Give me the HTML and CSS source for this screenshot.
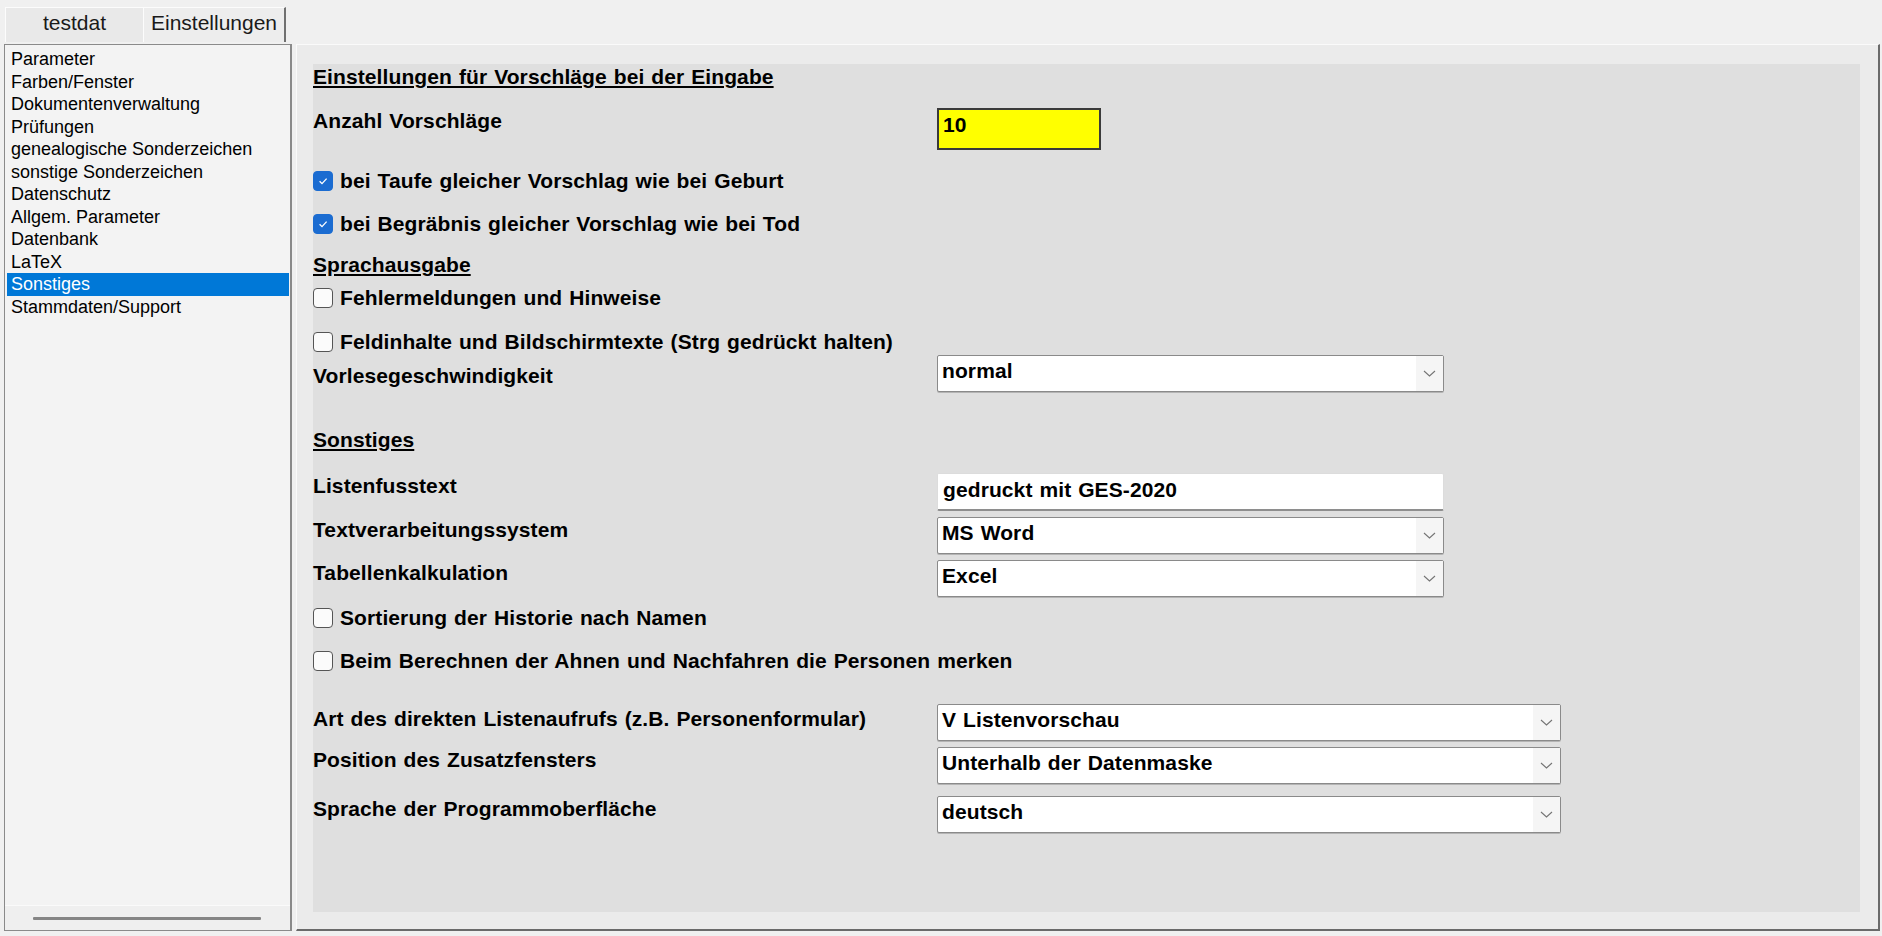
FILE: index.html
```html
<!DOCTYPE html>
<html lang="de">
<head>
    <meta charset="UTF-8">
    <title>Einstellungen</title>
    <link rel="stylesheet" href="styles.css">
</head>
<body>
    <div class="tabs">
        <div class="tab tab-data">testdat</div>
        <div class="tab tab-settings">Einstellungen</div>
    </div>
    <div class="page">
        <div class="nav">
            <ul>
                <li>Parameter</li>
                <li>Farben/Fenster</li>
                <li>Dokumentenverwaltung</li>
                <li>Prüfungen</li>
                <li>genealogische Sonderzeichen</li>
                <li>sonstige Sonderzeichen</li>
                <li>Datenschutz</li>
                <li>Allgem. Parameter</li>
                <li>Datenbank</li>
                <li>LaTeX</li>
                <li class="active">Sonstiges</li>
                <li>Stammdaten/Support</li>
            </ul>
            <div class="hscroll"><span></span></div>
        </div>
        <div class="panel">
            <div class="form">
                <div class="heading">Einstellungen für Vorschläge bei der Eingabe</div>

                <div class="row">
                    <div class="label">Anzahl Vorschläge</div>
                    <div class="num">10</div>
                </div>

                <div class="check first">
                    <span class="box checked"><svg width="12" height="12" viewBox="0 0 12 12"><path d="M2.6 6.2 5 8.6 9.6 3.6" fill="none" stroke="#fff" stroke-width="1.3"/></svg></span>
                    bei Taufe gleicher Vorschlag wie bei Geburt
                </div>
                <div class="check">
                    <span class="box checked"><svg width="12" height="12" viewBox="0 0 12 12"><path d="M2.6 6.2 5 8.6 9.6 3.6" fill="none" stroke="#fff" stroke-width="1.3"/></svg></span>
                    bei Begräbnis gleicher Vorschlag wie bei Tod
                </div>

                <div class="heading sub">Sprachausgabe</div>
                <div class="check near">
                    <span class="box"></span>
                    Fehlermeldungen und Hinweise
                </div>
                <div class="check loose">
                    <span class="box"></span>
                    Feldinhalte und Bildschirmtexte (Strg gedrückt halten)
                </div>
                <div class="row flush">
                    <div class="label low">Vorlesegeschwindigkeit</div>
                    <div class="combo">
                        <span class="combo-value">normal</span>
                        <span class="combo-btn"><svg width="13" height="7" viewBox="0 0 13 7"><path d="M1 1 6.5 6 12 1" fill="none" stroke="#747474" stroke-width="1.1"/></svg></span>
                    </div>
                </div>

                <div class="heading sub far">Sonstiges</div>
                <div class="row mid">
                    <div class="label">Listenfusstext</div>
                    <div class="textbox">gedruckt mit GES-2020</div>
                </div>
                <div class="row tight">
                    <div class="label">Textverarbeitungssystem</div>
                    <div class="combo">
                        <span class="combo-value">MS Word</span>
                        <span class="combo-btn"><svg width="13" height="7" viewBox="0 0 13 7"><path d="M1 1 6.5 6 12 1" fill="none" stroke="#747474" stroke-width="1.1"/></svg></span>
                    </div>
                </div>
                <div class="row tight">
                    <div class="label">Tabellenkalkulation</div>
                    <div class="combo">
                        <span class="combo-value">Excel</span>
                        <span class="combo-btn"><svg width="13" height="7" viewBox="0 0 13 7"><path d="M1 1 6.5 6 12 1" fill="none" stroke="#747474" stroke-width="1.1"/></svg></span>
                    </div>
                </div>
                <div class="check after-combo">
                    <span class="box"></span>
                    Sortierung der Historie nach Namen
                </div>
                <div class="check">
                    <span class="box"></span>
                    Beim Berechnen der Ahnen und Nachfahren die Personen merken
                </div>

                <div class="row far">
                    <div class="label nudge">Art des direkten Listenaufrufs (z.B. Personenformular)</div>
                    <div class="combo long">
                        <span class="combo-value">V Listenvorschau</span>
                        <span class="combo-btn"><svg width="13" height="7" viewBox="0 0 13 7"><path d="M1 1 6.5 6 12 1" fill="none" stroke="#747474" stroke-width="1.1"/></svg></span>
                    </div>
                </div>
                <div class="row tight">
                    <div class="label">Position des Zusatzfensters</div>
                    <div class="combo long">
                        <span class="combo-value">Unterhalb der Datenmaske</span>
                        <span class="combo-btn"><svg width="13" height="7" viewBox="0 0 13 7"><path d="M1 1 6.5 6 12 1" fill="none" stroke="#747474" stroke-width="1.1"/></svg></span>
                    </div>
                </div>
                <div class="row wider">
                    <div class="label">Sprache der Programmoberfläche</div>
                    <div class="combo long">
                        <span class="combo-value">deutsch</span>
                        <span class="combo-btn"><svg width="13" height="7" viewBox="0 0 13 7"><path d="M1 1 6.5 6 12 1" fill="none" stroke="#747474" stroke-width="1.1"/></svg></span>
                    </div>
                </div>
            </div>
        </div>
    </div>
</body>
</html>
```

FILE: styles.css
```css
* {
    box-sizing: border-box;
}
body {
    margin: 0;
    height: 936px;
    overflow: hidden;
    background: #f0f0f0;
    font-family: "Liberation Sans", Arial, sans-serif;
    color: #000;
}

/* tab strip */
.tabs {
    height: 42px;
    display: flex;
    align-items: flex-end;
    padding-left: 5px;
}
.tab {
    height: 35px;
    padding-bottom: 4px;
    font-size: 21px;
    display: flex;
    align-items: center;
    justify-content: center;
    background: #e9e9e9;
    border-top: 1px solid #fcfcfc;
    border-left: 1px solid #fcfcfc;
    color: #1a1a1a;
}
.tab-data {
    width: 138px;
}
.tab-settings {
    width: 143px;
    background: #ededed;
    border-right: 2px solid #707070;
}

.page {
    display: flex;
    gap: 4px;
    height: 894px;
    padding: 2px 2px 5px 4px;
}

/* left list */
.nav {
    width: 288px;
    display: flex;
    flex-direction: column;
    background: #f3f3f3;
    border: 1px solid #8a8a8a;
    border-right: 2px solid #8a8a8a;
}
.nav ul {
    list-style: none;
    margin: 0;
    padding: 3px 1px 0 2px;
    flex: 1;
}
.nav li {
    font-size: 18px;
    line-height: 22.5px;
    padding-left: 4px;
    white-space: nowrap;
}
.nav li.active {
    background: #0078d7;
    color: #fff;
}
.hscroll {
    height: 25px;
    background: #efefef;
    border-top: 1px solid #fafafa;
    display: flex;
    align-items: center;
    padding-left: 28px;
}
.hscroll span {
    width: 228px;
    height: 3px;
    background: #858585;
    border-radius: 1px;
}

/* right panel */
.panel {
    flex: 1;
    display: flex;
    background: #ebebeb;
    border-top: 1px solid #fafafa;
    border-left: 1px solid #fafafa;
    border-right: 2px solid #6a6a6a;
    border-bottom: 2px solid #6a6a6a;
    padding: 19px 18px 17px 16px;
}
.form {
    flex: 1;
    background: #dfdfdf;
    font-size: 21px;
    font-weight: bold;
    line-height: 24px;
    word-spacing: 1px;
    letter-spacing: 0.1px;
}
.heading {
    line-height: 26px;
    text-decoration: underline;
    text-underline-offset: 2px;
}
.heading.sub {
    margin-top: 16px;
}
.heading.far {
    margin-top: 35px;
}

.row {
    display: flex;
    align-items: flex-start;
    margin-top: 18px;
}
.row.flush {
    margin-top: 1px;
}
.row.mid {
    margin-top: 20px;
}
.row.tight {
    margin-top: 6px;
}
.row.far {
    margin-top: 31px;
}
.row.wider {
    margin-top: 12px;
}
.label {
    width: 624px;
    flex: none;
    padding-top: 1px;
}
.label.low {
    padding-top: 9px;
}
.label.nudge {
    padding-top: 3px;
}

.num {
    width: 164px;
    height: 42px;
    background: #ffff00;
    border: 2px solid #3a3a3a;
    padding: 3px 4px;
}
.textbox {
    width: 507px;
    height: 38px;
    background: #fff;
    border: 1px solid #dcdcdc;
    border-bottom: 2px solid #8e8e8e;
    border-radius: 2px;
    padding: 4px 5px;
}
.combo {
    width: 507px;
    height: 37px;
    display: flex;
    background: #fff;
    border: 1px solid #8a8a8a;
    border-radius: 2px;
    box-shadow: 0 1px 0 #b4b4b4;
}
.combo.long {
    width: 624px;
}
.combo-value {
    flex: 1;
    padding: 3px 4px;
}
.combo-btn {
    width: 27px;
    background: #f5f5f5;
    display: flex;
    align-items: center;
    justify-content: center;
}

/* checkboxes */
.check {
    display: flex;
    align-items: center;
    gap: 7px;
    height: 24px;
    margin-top: 19px;
}
.check.near {
    margin-top: 8px;
}
.check.loose {
    margin-top: 20px;
}
.check.after-combo {
    margin-top: 9px;
}
.box {
    width: 20px;
    height: 20px;
    flex: none;
    border: 1px solid #555;
    border-radius: 4px;
    background: #fbfbfb;
}
.box.checked {
    background: #1b6cd1;
    border-color: #1b6cd1;
    display: flex;
    align-items: center;
    justify-content: center;
}
```
